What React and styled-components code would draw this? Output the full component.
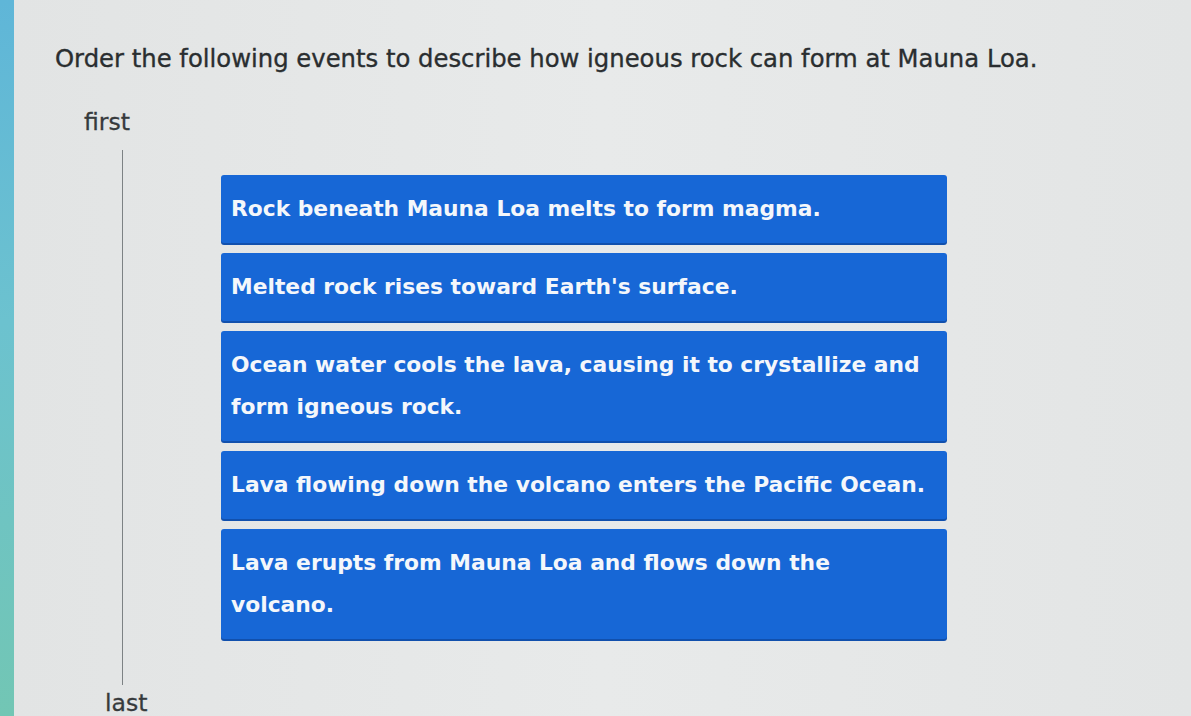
import React from "react";
import styled, { createGlobalStyle } from "styled-components";

const Global = createGlobalStyle`
  html, body { margin: 0; padding: 0; }
  body { background: #e4e6e6; font-family: "DejaVu Sans", Verdana, sans-serif; overflow: hidden; }
`;

const Page = styled.div`
  display: flex;
  width: 1191px;
  height: 716px;
  overflow: hidden;
`;

const EdgeStrip = styled.div`
  width: 14px;
  flex: none;
  background: linear-gradient(180deg, #5fb6d8 0%, #6cc2cf 45%, #72c6b4 100%);
`;

const Screen = styled.div`
  flex: 1;
  display: flex;
  flex-direction: column;
  background: linear-gradient(90deg, #e2e4e4 0%, #e8eaea 50%, #e3e5e5 100%);
`;

const TopBar = styled.div`
  height: 8px;
  margin-left: 36px;
  background: #d6d8d9;
`;

const Title = styled.h1`
  margin: 44px 0 0 41px;
  font-size: 24.3px;
  line-height: 30px;
  font-weight: normal;
  color: #2a2e30;
  -webkit-text-stroke: 0.35px #2a2e30;
  white-space: nowrap;
`;

const Label = styled.div`
  font-size: 23.5px;
  line-height: 28px;
  color: #363a3c;
  -webkit-text-stroke: 0.3px #363a3c;
  margin-left: ${(p) => p.$indent}px;
`;

const Sorter = styled.div`
  display: grid;
  grid-template-columns: 1px 1fr;
  column-gap: 98px;
  margin: 14px 0 0 108px;
`;

const Rail = styled.div`
  background: #7d8284;
  height: 535px;
`;

const List = styled.div`
  display: flex;
  flex-direction: column;
  gap: 10px;
  width: 726px;
  padding-top: 25px;
`;

const Card = styled.div`
  background: #1767d6;
  color: #f4f7fb;
  font-size: 21.8px;
  font-weight: bold;
  line-height: 42px;
  padding: 13px 14px 13px 10px;
  border-radius: 3px;
  box-shadow: 0 2px 0 #1150ad;
`;

const items = [
  "Rock beneath Mauna Loa melts to form magma.",
  "Melted rock rises toward Earth's surface.",
  "Ocean water cools the lava, causing it to crystallize and form igneous rock.",
  "Lava flowing down the volcano enters the Pacific Ocean.",
  "Lava erupts from Mauna Loa and flows down the volcano.",
];

export default function App() {
  return (
    <Page>
      <Global />
      <EdgeStrip />
      <Screen>
        <TopBar />
        <Title>Order the following events to describe how igneous rock can form at Mauna Loa.</Title>
        <Label $indent={70} style={{ marginTop: "34px" }}>first</Label>
        <Sorter>
          <Rail />
          <List>
            {items.map((t) => (
              <Card key={t}>{t}</Card>
            ))}
          </List>
        </Sorter>
        <Label $indent={91} style={{ marginTop: "4px" }}>last</Label>
      </Screen>
    </Page>
  );
}
